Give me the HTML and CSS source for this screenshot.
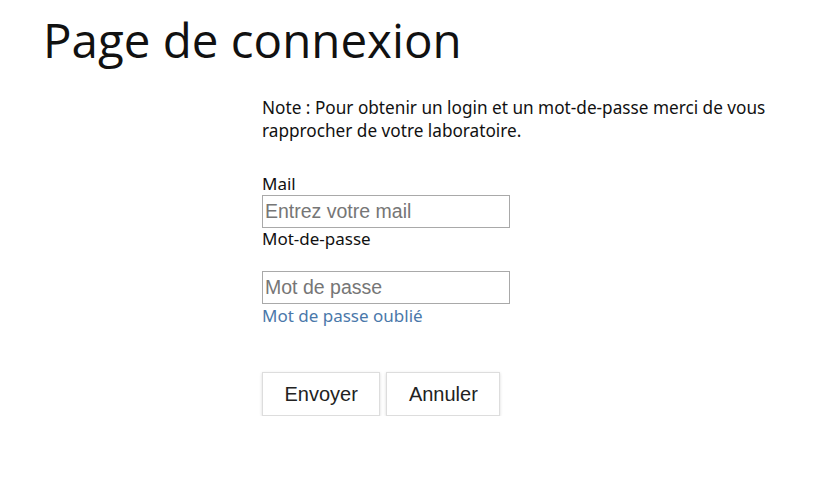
FILE: index.html
```html
<!DOCTYPE html>
<html lang="fr">

<head>
    <meta charset="UTF-8">
    <meta name="viewport" content="width=device-width, initial-scale=1.0">
    <title>Page de connexion</title>
    <link rel="stylesheet" href="styles.css">
</head>

<body>
    <h1 class="page-title">Page de connexion</h1>

    <div class="login-box">
        <p class="note">Note : Pour obtenir un login et un mot-de-passe merci de vous rapprocher de votre laboratoire.</p>

        <form class="login-form">
            <label for="mail">Mail</label>
            <input type="text" id="mail" placeholder="Entrez votre mail">

            <label for="password">Mot-de-passe</label>
            <input type="password" id="password" class="password-input" placeholder="Mot de passe">
            <a href="#" class="forgot-link">Mot de passe oublié</a>

            <div class="buttons">
                <button type="submit">Envoyer</button>
                <button type="reset">Annuler</button>
            </div>
        </form>
    </div>
</body>

</html>
```

FILE: styles.css
```css
/* General Styles */
body {
    font-family: 'Noto Sans', sans-serif;
    background-color: #fff;
    color: #111;
    margin: 0;
    padding: 0;
}

.page-title {
    font-family: 'Open Sans', sans-serif;
    font-weight: normal;
    font-size: 47.5px;
    line-height: 56px;
    margin: 12px 0 0 43px;
    color: #111;
}

.login-box {
    margin-left: 262px;
    width: 540px;
}

.note {
    font-size: 17.2px;
    line-height: 23px;
    margin: 28px 0 0;
}

.login-form {
    display: flex;
    flex-direction: column;
    align-items: flex-start;
    margin-top: 31px;
}

label {
    font-size: 17px;
    line-height: 22px;
}

input {
    width: 248px;
    height: 33px;
    box-sizing: border-box;
    padding: 2px 2px;
    border: 1px solid #a9a9a9;
    font-family: 'Liberation Sans', Arial, sans-serif;
    font-size: 19.5px;
    color: #333;
}

input::placeholder {
    color: #767676;
}

.password-input {
    margin-top: 21px;
}

.forgot-link {
    color: #4a78aa;
    text-decoration: none;
    font-size: 17px;
    line-height: 24px;
}

.buttons {
    display: flex;
    gap: 6px;
    margin-top: 44px;
}

button {
    font-family: 'Liberation Sans', Arial, sans-serif;
    font-size: 20px;
    color: #222;
    background-color: #fff;
    border: 1px solid #ddd;
    box-shadow: 0 1px 3px rgba(0, 0, 0, 0.15);
    height: 44px;
    padding: 0 21.5px;
    cursor: pointer;
}
```
